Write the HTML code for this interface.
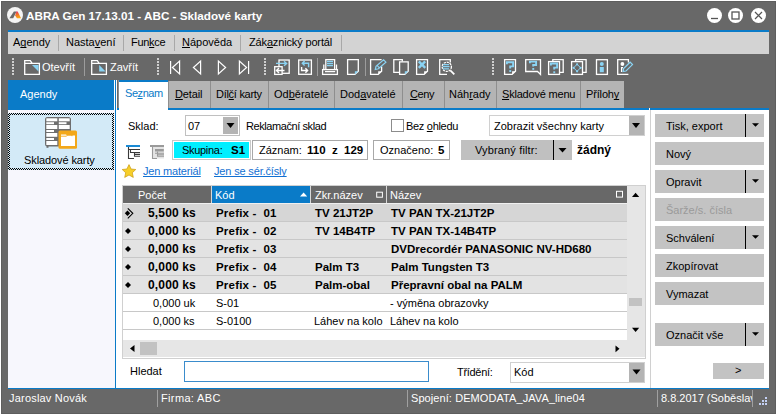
<!DOCTYPE html>
<html><head><meta charset="utf-8">
<style>
*{margin:0;padding:0;box-sizing:border-box}
html,body{width:777px;height:415px;overflow:hidden;background:#686868}
body{font-family:"Liberation Sans",sans-serif;font-size:11px;line-height:13px;color:#000;position:relative}
.r{position:absolute}
.t{position:absolute;white-space:nowrap}
u{text-decoration:underline;text-decoration-skip-ink:none}
.chk{background:repeating-conic-gradient(#000 0 25%,#d3eaf7 0 50%) 0 0/2px 2px}
svg{position:absolute;left:0;top:0}
</style></head><body>
<div class="r" style="left:0px;top:0px;width:777px;height:415px;background:#ffffff;"></div>
<div class="r" style="left:1px;top:1px;width:775px;height:413px;background:#5e5e5e;"></div>
<div class="r" style="left:2px;top:2px;width:773px;height:411px;background:#686868;"></div>
<div class="t" style="left:26px;top:9px;font-size:11.7px;font-weight:bold;color:#fff;">ABRA Gen 17.13.01 - ABC - Skladové karty</div>
<div class="r" style="left:8px;top:30px;width:761px;height:2px;background:#0a7bc8;"></div>
<div class="r" style="left:8px;top:32px;width:761px;height:22px;background:#d3d3d3;"></div>
<div class="t" style="left:13px;top:36px;">A<u>g</u>endy</div>
<div class="r" style="left:58px;top:35px;width:1px;height:16px;background:#a8a8a8;"></div>
<div class="t" style="left:66px;top:36px;">Nasta<u>v</u>ení</div>
<div class="r" style="left:123px;top:35px;width:1px;height:16px;background:#a8a8a8;"></div>
<div class="t" style="left:131px;top:36px;letter-spacing:-0.3px">Fun<u>k</u>ce</div>
<div class="r" style="left:174px;top:35px;width:1px;height:16px;background:#a8a8a8;"></div>
<div class="t" style="left:182px;top:36px;"><u>N</u>ápověda</div>
<div class="r" style="left:240px;top:35px;width:1px;height:16px;background:#a8a8a8;"></div>
<div class="t" style="left:249px;top:36px;letter-spacing:-0.15px">Zák<u>a</u>znický portál</div>
<div class="r" style="left:341px;top:35px;width:1px;height:16px;background:#a8a8a8;"></div>
<div class="t" style="left:42px;top:61px;color:#fff;">Otevřít</div>
<div class="t" style="left:110px;top:61px;color:#fff;">Zavřít</div>
<div class="r" style="left:8px;top:80px;width:106px;height:30px;background:#0a7bc8;"></div>
<div class="t" style="left:20px;top:88px;color:#fff;">Agendy</div>
<div class="r" style="left:8px;top:110px;width:107px;height:278px;background:#f7f7fd;"></div>
<div class="r" style="left:115px;top:80px;width:1px;height:308px;background:#0a7bc8;"></div>
<div class="r chk" style="left:8px;top:113px;width:106px;height:57px"></div>
<div class="r" style="left:10px;top:115px;width:102px;height:53px;background:#d3eaf7;"></div>
<div class="t" style="left:24px;top:154px;letter-spacing:-0.1px">Skladové karty</div>
<div class="r" style="left:117px;top:80px;width:1px;height:28px;background:#686868;"></div>
<div class="r" style="left:118px;top:80px;width:1px;height:28px;background:#8e8e8e;"></div>
<div class="r" style="left:114px;top:80px;width:1px;height:30px;background:#ffffff;"></div>
<div class="r" style="left:116px;top:80px;width:1px;height:308px;background:#ffffff;"></div>
<div class="r" style="left:119px;top:80px;width:49px;height:2px;background:#0a7bc8;"></div>
<div class="r" style="left:119px;top:82px;width:49px;height:28px;background:#ffffff;"></div>
<div class="r" style="left:117px;top:108px;width:2px;height:2px;background:#0a7bc8;"></div>
<div class="t" style="left:125px;top:87px;color:#0a7bc8;letter-spacing:-0.45px">Se<u>z</u>nam</div>
<div class="r" style="left:168px;top:81px;width:42px;height:27px;background:#b4b4b4;"></div>
<div class="r" style="left:168px;top:81px;width:1px;height:27px;background:#8e8e8e;"></div>
<div class="t" style="left:175px;top:88px;letter-spacing:-0.15px"><u>D</u>etail</div>
<div class="r" style="left:210px;top:81px;width:58px;height:27px;background:#b4b4b4;"></div>
<div class="r" style="left:210px;top:81px;width:1px;height:27px;background:#8e8e8e;"></div>
<div class="t" style="left:216px;top:88px;letter-spacing:-0.28px">Díl<u>č</u>í karty</div>
<div class="r" style="left:268px;top:81px;width:66px;height:27px;background:#b4b4b4;"></div>
<div class="r" style="left:268px;top:81px;width:1px;height:27px;background:#8e8e8e;"></div>
<div class="t" style="left:274px;top:88px;">Od<u>b</u>ěratelé</div>
<div class="r" style="left:334px;top:81px;width:68px;height:27px;background:#b4b4b4;"></div>
<div class="r" style="left:334px;top:81px;width:1px;height:27px;background:#8e8e8e;"></div>
<div class="t" style="left:340px;top:88px;">Dod<u>a</u>vatelé</div>
<div class="r" style="left:402px;top:81px;width:42px;height:27px;background:#b4b4b4;"></div>
<div class="r" style="left:402px;top:81px;width:1px;height:27px;background:#8e8e8e;"></div>
<div class="t" style="left:410px;top:88px;letter-spacing:-0.4px"><u>C</u>eny</div>
<div class="r" style="left:444px;top:81px;width:52px;height:27px;background:#b4b4b4;"></div>
<div class="r" style="left:444px;top:81px;width:1px;height:27px;background:#8e8e8e;"></div>
<div class="t" style="left:449px;top:88px;">Náh<u>r</u>ady</div>
<div class="r" style="left:496px;top:81px;width:84px;height:27px;background:#b4b4b4;"></div>
<div class="r" style="left:496px;top:81px;width:1px;height:27px;background:#8e8e8e;"></div>
<div class="t" style="left:502px;top:88px;letter-spacing:-0.2px"><u>S</u>kladové menu</div>
<div class="r" style="left:580px;top:81px;width:44px;height:27px;background:#b4b4b4;"></div>
<div class="r" style="left:580px;top:81px;width:1px;height:27px;background:#8e8e8e;"></div>
<div class="t" style="left:586px;top:88px;letter-spacing:-0.15px">Příloh<u>y</u></div>
<div class="r" style="left:168px;top:108px;width:481px;height:2px;background:#0a7bc8;"></div>
<div class="r" style="left:650px;top:108px;width:119px;height:2px;background:#0a7bc8;"></div>
<div class="r" style="left:117px;top:110px;width:532px;height:278px;background:#ffffff;"></div>
<div class="r" style="left:649px;top:108px;width:1px;height:280px;background:#ffffff;"></div>
<div class="r" style="left:650px;top:110px;width:1px;height:278px;background:#d0d0d0;"></div>
<div class="r" style="left:651px;top:110px;width:118px;height:278px;background:#ffffff;"></div>
<div class="r" style="left:8px;top:388px;width:761px;height:1px;background:#0a7bc8;"></div>
<div class="t" style="left:9px;top:392px;color:#fff;letter-spacing:0.2px">Jaroslav Novák</div>
<div class="r" style="left:157px;top:390px;width:1px;height:17px;background:#a0a0a0;"></div>
<div class="t" style="left:161px;top:392px;color:#fff;letter-spacing:0.35px">Firma: ABC</div>
<div class="r" style="left:407px;top:390px;width:1px;height:17px;background:#a0a0a0;"></div>
<div class="t" style="left:411px;top:392px;color:#fff;letter-spacing:0.08px">Spojení: DEMODATA_JAVA_line04</div>
<div class="r" style="left:657px;top:390px;width:1px;height:17px;background:#a0a0a0;"></div>
<div class="t" style="left:661px;top:392px;color:#fff;width:91px;overflow:hidden">8.8.2017 (Soběslav)</div>
<div class="r" style="left:752px;top:390px;width:1px;height:17px;background:#a0a0a0;"></div>
<div class="t" style="left:128px;top:120px;">Sklad:</div>
<div class="r" style="left:185px;top:115px;width:55px;height:21px;background:#c0c0c0;"></div>
<div class="r" style="left:186px;top:116px;width:53px;height:19px;background:#ffffff;"></div>
<div class="r" style="left:223px;top:117px;width:15px;height:17px;background:#b4b4b4;"></div>
<div class="t" style="left:188px;top:120px;">07</div>
<div class="t" style="left:246px;top:120px;letter-spacing:-0.42px">Reklamační sklad</div>
<div class="r" style="left:391px;top:119px;width:13px;height:13px;background:#8c8c8c;"></div>
<div class="r" style="left:392px;top:120px;width:11px;height:11px;background:#ffffff;"></div>
<div class="t" style="left:406px;top:120px;letter-spacing:-0.3px">Bez <u>o</u>hledu</div>
<div class="r" style="left:489px;top:115px;width:156px;height:21px;background:#d0d0d0;"></div>
<div class="r" style="left:490px;top:116px;width:154px;height:19px;background:#ffffff;"></div>
<div class="r" style="left:629px;top:116px;width:15px;height:19px;background:#b4b4b4;"></div>
<div class="t" style="left:494px;top:120px;">Zobrazit všechny karty</div>
<div class="r" style="left:172px;top:140px;width:79px;height:20px;background:#c8c8c8;"></div>
<div class="r" style="left:173px;top:141px;width:77px;height:18px;background:#ffffff;"></div>
<div class="r" style="left:174px;top:142px;width:75px;height:16px;background:#00efff;"></div>
<div class="t" style="left:182px;top:144px;letter-spacing:-0.3px">Skupina:</div>
<div class="t" style="left:231px;top:144px;font-size:11.5px;font-weight:bold;">S1</div>
<div class="r" style="left:252px;top:140px;width:116px;height:20px;background:#a8a8a8;"></div>
<div class="r" style="left:253px;top:141px;width:114px;height:18px;background:#ffffff;"></div>
<div class="t" style="left:259px;top:144px;">Záznam:</div>
<div class="t" style="left:307px;top:144px;font-size:11.5px;font-weight:bold;">110&nbsp; z&nbsp; 129</div>
<div class="r" style="left:373px;top:140px;width:77px;height:20px;background:#a8a8a8;"></div>
<div class="r" style="left:374px;top:141px;width:75px;height:18px;background:#ffffff;"></div>
<div class="t" style="left:380px;top:144px;">Označeno:</div>
<div class="t" style="left:438px;top:144px;font-size:11.5px;font-weight:bold;">5</div>
<div class="r" style="left:461px;top:140px;width:111px;height:20px;background:#c0c0c0;"></div>
<div class="r" style="left:553px;top:140px;width:1px;height:20px;background:#000;"></div>
<div class="t" style="left:475px;top:144px;letter-spacing:0.15px">Vybraný filtr:</div>
<div class="t" style="left:577px;top:144px;font-size:12px;font-weight:bold;">žádný</div>
<div class="t" style="left:143px;top:165px;color:#1270d2;letter-spacing:-0.18px"><u>Jen materiál</u></div>
<div class="t" style="left:214px;top:165px;color:#1270d2;letter-spacing:-0.16px"><u>Jen se sér.čísly</u></div>
<div class="r" style="left:122px;top:185px;width:524px;height:174px;background:#d0d0d0;"></div>
<div class="r" style="left:123px;top:186px;width:522px;height:172px;background:#ffffff;"></div>
<div class="r" style="left:123px;top:186px;width:504px;height:17px;background:#686868;"></div>
<div class="r" style="left:211px;top:186px;width:1px;height:17px;background:#d8d8d8;"></div>
<div class="r" style="left:212px;top:186px;width:98px;height:17px;background:#0a7bc8;"></div>
<div class="r" style="left:310px;top:186px;width:1px;height:17px;background:#d8d8d8;"></div>
<div class="r" style="left:386px;top:186px;width:1px;height:17px;background:#d8d8d8;"></div>
<div class="t" style="left:138px;top:189px;color:#fff;">Počet</div>
<div class="t" style="left:215px;top:189px;color:#fff;">Kód</div>
<div class="t" style="left:315px;top:189px;color:#fff;">Zkr.název</div>
<div class="t" style="left:390px;top:189px;color:#fff;">Název</div>
<div class="r" style="left:627px;top:186px;width:18px;height:154px;background:#e6e6e6;"></div>
<div class="r" style="left:629px;top:298px;width:13px;height:8px;background:#c2c2c2;"></div>
<div class="r" style="left:123px;top:340px;width:522px;height:17px;background:#e6e6e6;"></div>
<div class="r" style="left:140px;top:342px;width:17px;height:13px;background:#c2c2c2;"></div>
<div class="r" style="left:123px;top:204px;width:504px;height:17px;background:#d6d6d6;"></div>
<div class="r" style="left:123px;top:221px;width:504px;height:1px;background:#c8c8c8;"></div>
<div class="t" style="left:148px;top:207px;font-size:12px;font-weight:bold;letter-spacing:0.15px">5,500 ks</div>
<div class="t" style="left:216px;top:207px;font-size:11.5px;font-weight:bold;letter-spacing:0.2px">Prefix - &nbsp;01</div>
<div class="t" style="left:315px;top:207px;font-size:11.5px;font-weight:bold;">TV 21JT2P</div>
<div class="t" style="left:391px;top:207px;font-size:11.5px;font-weight:bold;">TV PAN TX-21JT2P</div>
<div class="r" style="left:123px;top:222px;width:504px;height:17px;background:#e3e3e3;"></div>
<div class="r" style="left:123px;top:239px;width:504px;height:1px;background:#c8c8c8;"></div>
<div class="t" style="left:148px;top:225px;font-size:12px;font-weight:bold;letter-spacing:0.15px">0,000 ks</div>
<div class="t" style="left:216px;top:225px;font-size:11.5px;font-weight:bold;letter-spacing:0.2px">Prefix - &nbsp;02</div>
<div class="t" style="left:315px;top:225px;font-size:11.5px;font-weight:bold;">TV 14B4TP</div>
<div class="t" style="left:391px;top:225px;font-size:11.5px;font-weight:bold;">TV PAN TX-14B4TP</div>
<div class="r" style="left:123px;top:240px;width:504px;height:17px;background:#e3e3e3;"></div>
<div class="r" style="left:123px;top:257px;width:504px;height:1px;background:#c8c8c8;"></div>
<div class="t" style="left:148px;top:243px;font-size:12px;font-weight:bold;letter-spacing:0.15px">0,000 ks</div>
<div class="t" style="left:216px;top:243px;font-size:11.5px;font-weight:bold;letter-spacing:0.2px">Prefix - &nbsp;03</div>
<div class="t" style="left:315px;top:243px;font-size:11.5px;font-weight:bold;"></div>
<div class="t" style="left:391px;top:243px;font-size:11.5px;font-weight:bold;">DVDrecordér PANASONIC NV-HD680</div>
<div class="r" style="left:123px;top:258px;width:504px;height:17px;background:#e3e3e3;"></div>
<div class="r" style="left:123px;top:275px;width:504px;height:1px;background:#c8c8c8;"></div>
<div class="t" style="left:148px;top:261px;font-size:12px;font-weight:bold;letter-spacing:0.15px">0,000 ks</div>
<div class="t" style="left:216px;top:261px;font-size:11.5px;font-weight:bold;letter-spacing:0.2px">Prefix - &nbsp;04</div>
<div class="t" style="left:315px;top:261px;font-size:11.5px;font-weight:bold;">Palm T3</div>
<div class="t" style="left:391px;top:261px;font-size:11.5px;font-weight:bold;">Palm Tungsten T3</div>
<div class="r" style="left:123px;top:276px;width:504px;height:17px;background:#e3e3e3;"></div>
<div class="r" style="left:123px;top:293px;width:504px;height:1px;background:#c8c8c8;"></div>
<div class="t" style="left:148px;top:279px;font-size:12px;font-weight:bold;letter-spacing:0.15px">0,000 ks</div>
<div class="t" style="left:216px;top:279px;font-size:11.5px;font-weight:bold;letter-spacing:0.2px">Prefix - &nbsp;05</div>
<div class="t" style="left:315px;top:279px;font-size:11.5px;font-weight:bold;">Palm-obal</div>
<div class="t" style="left:391px;top:279px;font-size:11.5px;font-weight:bold;">Přepravní obal na PALM</div>
<div class="r" style="left:123px;top:294px;width:504px;height:17px;background:#ffffff;"></div>
<div class="r" style="left:123px;top:311px;width:504px;height:1px;background:#c8c8c8;"></div>
<div class="t" style="left:153px;top:297px;">0,000 uk</div>
<div class="t" style="left:216px;top:297px;">S-01</div>
<div class="t" style="left:314px;top:297px;"></div>
<div class="t" style="left:390px;top:297px;">- výměna obrazovky</div>
<div class="r" style="left:123px;top:312px;width:504px;height:17px;background:#ffffff;"></div>
<div class="r" style="left:123px;top:329px;width:504px;height:1px;background:#c8c8c8;"></div>
<div class="t" style="left:153px;top:315px;">0,000 ks</div>
<div class="t" style="left:216px;top:315px;">S-0100</div>
<div class="t" style="left:314px;top:315px;">Láhev na kolo</div>
<div class="t" style="left:390px;top:315px;">Láhev na kolo</div>
<div class="r" style="left:123px;top:203px;width:504px;height:1px;background:#f0f0f0;"></div>
<div class="t" style="left:130px;top:365px;">Hledat</div>
<div class="r" style="left:184px;top:361px;width:245px;height:21px;background:#3a8ccc;"></div>
<div class="r" style="left:185px;top:362px;width:243px;height:19px;background:#ffffff;"></div>
<div class="t" style="left:457px;top:366px;letter-spacing:-0.3px">Třídění:</div>
<div class="r" style="left:510px;top:362px;width:135px;height:21px;background:#d0d0d0;"></div>
<div class="r" style="left:511px;top:363px;width:133px;height:19px;background:#ffffff;"></div>
<div class="r" style="left:629px;top:363px;width:15px;height:19px;background:#b4b4b4;"></div>
<div class="t" style="left:514px;top:366px;">Kód</div>
<div class="r" style="left:655px;top:114px;width:109px;height:23px;background:#c3c3c3;"></div>
<div class="r" style="left:745px;top:114px;width:1px;height:23px;background:#000;"></div>
<div class="t" style="left:666px;top:120px;">Tisk, export</div>
<div class="r" style="left:655px;top:142px;width:109px;height:23px;background:#c3c3c3;"></div>
<div class="t" style="left:666px;top:148px;">Nový</div>
<div class="r" style="left:655px;top:170px;width:109px;height:23px;background:#c3c3c3;"></div>
<div class="r" style="left:745px;top:170px;width:1px;height:23px;background:#000;"></div>
<div class="t" style="left:666px;top:176px;">Opravit</div>
<div class="r" style="left:655px;top:198px;width:109px;height:23px;background:#c3c3c3;"></div>
<div class="t" style="left:666px;top:204px;color:#9a9a9a;">Šarže/s. čísla</div>
<div class="r" style="left:655px;top:226px;width:109px;height:23px;background:#c3c3c3;"></div>
<div class="r" style="left:745px;top:226px;width:1px;height:23px;background:#000;"></div>
<div class="t" style="left:666px;top:232px;">Schválení</div>
<div class="r" style="left:655px;top:254px;width:109px;height:23px;background:#c3c3c3;"></div>
<div class="t" style="left:666px;top:260px;">Zkopírovat</div>
<div class="r" style="left:655px;top:282px;width:109px;height:23px;background:#c3c3c3;"></div>
<div class="t" style="left:666px;top:288px;">Vymazat</div>
<div class="r" style="left:655px;top:323px;width:109px;height:23px;background:#c3c3c3;"></div>
<div class="r" style="left:745px;top:323px;width:1px;height:23px;background:#000;"></div>
<div class="t" style="left:666px;top:329px;">Označit vše</div>
<div class="r" style="left:713px;top:363px;width:51px;height:16px;background:#c3c3c3;"></div>
<div class="t" style="left:735px;top:364px;">&gt;</div>
<svg width="777" height="415" viewBox="0 0 777 415">
<!-- logo -->
<defs><linearGradient id="lg" x1="0" y1="0" x2="0.3" y2="1"><stop offset="0" stop-color="#e0207a"/><stop offset="0.45" stop-color="#f36a2a"/><stop offset="1" stop-color="#f7a818"/></linearGradient></defs>
<circle cx="15" cy="15" r="8" fill="#f4f4f4"/>
<path d="M9.4 18.3 L13.9 11.4 H16.6 L13.2 18.3 Z" fill="#6a6a6a"/>
<path d="M16.3 11.4 H17.7 L21.1 18.3 H16.9 L15.2 15.6 Z" fill="url(#lg)"/>
<!-- window buttons -->
<circle cx="714.5" cy="15.5" r="7.5" fill="#fff"/>
<path d="M711 18.5 H718" stroke="#555" stroke-width="1.3"/>
<circle cx="735.5" cy="15.5" r="7.5" fill="#fff"/>
<rect x="732" y="12" width="7" height="7" fill="none" stroke="#555" stroke-width="1.3"/>
<circle cx="758.5" cy="15.5" r="7.5" fill="#fff"/>
<path d="M755 12 L762 19 M762 12 L755 19" stroke="#555" stroke-width="1.2"/>
<!-- grips -->
<g fill="#cfcfcf">
<rect x="12" y="58" width="2" height="2"/><rect x="12" y="61" width="2" height="2"/><rect x="12" y="64" width="2" height="2"/><rect x="12" y="67" width="2" height="2"/><rect x="12" y="70" width="2" height="2"/><rect x="12" y="73" width="2" height="2"/>
<rect x="157" y="58" width="2" height="2"/><rect x="157" y="61" width="2" height="2"/><rect x="157" y="64" width="2" height="2"/><rect x="157" y="67" width="2" height="2"/><rect x="157" y="70" width="2" height="2"/><rect x="157" y="73" width="2" height="2"/>
<rect x="264" y="58" width="2" height="2"/><rect x="264" y="61" width="2" height="2"/><rect x="264" y="64" width="2" height="2"/><rect x="264" y="67" width="2" height="2"/><rect x="264" y="70" width="2" height="2"/><rect x="264" y="73" width="2" height="2"/>
<rect x="492" y="58" width="2" height="2"/><rect x="492" y="61" width="2" height="2"/><rect x="492" y="64" width="2" height="2"/><rect x="492" y="67" width="2" height="2"/><rect x="492" y="70" width="2" height="2"/><rect x="492" y="73" width="2" height="2"/>
</g>
<g fill="#9c9c9c">
<rect x="84" y="58" width="1" height="18"/>
<rect x="317" y="58" width="1" height="18"/>
<rect x="365" y="58" width="1" height="18"/>
</g>
<g fill="none" stroke="#fff" stroke-width="1.3">
<!-- folders -->
<path d="M24.7 74.4 V60.6 H30.3 L32.2 63.3 H39.4 V74.4 Z M24.7 63.3 H32.2"/>
<path d="M91.7 74.4 V60.6 H97.3 L99.2 63.3 H106.4 V74.4 Z M91.7 63.3 H99.2"/>
<!-- nav -->
<path d="M170.6 61 V74 M179.6 61 V74 L172.4 67.5 Z" stroke-width="1.2"/>
<path d="M200.6 61 V74 L193.4 67.5 Z" stroke-width="1.2"/>
<path d="M218.4 61 V74 L225.6 67.5 Z" stroke-width="1.2"/>
<path d="M239.4 61 V74 L246.6 67.5 Z M248.6 61 V74" stroke-width="1.2"/>
<!-- icon A -->
<rect x="279" y="60" width="10.2" height="13.3"/>
<rect x="274.7" y="66.7" width="7.4" height="7.7" fill="#686868"/>
<!-- icon B -->
<rect x="298.7" y="60" width="12.7" height="14.3"/>
<!-- printer -->
<path d="M325.8 69 V59.7 H334.6 V69"/>
<path d="M323.8 69 V64.6 M336.5 69 V64.6"/>
<rect x="322.6" y="69.6" width="14.8" height="4.8"/>
<path d="M325 71.6 H335.2"/>
<!-- new doc -->
<path d="M347.6 59.7 H358.3 V71.2 L354.9 74.4 H347.6 Z"/>
<!-- edit doc -->
<path d="M381.6 66.5 V71.2 L378.2 74.4 H370.6 V59.7 H381.6"/>
<!-- copy -->
<path d="M399 72.4 H393.8 V59.7 H402.3 V61.5"/>
<path d="M399.6 61.8 H408.2 V71.2 L404.8 74.4 H399.6 Z"/>
<!-- delete doc -->
<path d="M416.6 59.7 H427.5 V71.2 L424.1 74.4 H416.6 Z"/>
<!-- search doc -->
<path d="M450.3 62.5 V59.7 H439.7 V74.4 H447"/>
<circle cx="446.8" cy="66.8" r="4.6" fill="#686868" stroke-dasharray="2.2 0.8"/>
<path d="M450.3 70.3 L454.3 74.3" stroke-width="1.8"/>
<!-- help doc -->
<path d="M504.6 59.7 H515.5 V71.2 L512.1 74.4 H504.6 Z"/>
<!-- speech -->
<path d="M525.7 59.7 H540.5 V74.4 L537.5 71.5 H525.7 Z"/>
<!-- docs ? -->
<path d="M559.5 72.3 H563.2 V59.7 H552.8 V61.4"/>
<rect x="548.6" y="61.6" width="10.9" height="12.8"/>
<!-- docs diamond -->
<path d="M582.3 72.3 H586.1 V59.7 H575.6 V61.4"/>
<rect x="571.6" y="61.6" width="10.9" height="12.8"/>
<!-- info -->
<rect x="596.5" y="59.7" width="10.9" height="14.7"/>
<!-- person edit -->
<path d="M628.4 62.5 V59.7 H617.7 V74.4 H628.4"/>
<path d="M621.6 72 V67.6 H623"/>
</g>
<g fill="#fff">
<!-- folds -->
<path d="M381.6 71.2 L378.2 74.4 V71.2 Z"/>
<path d="M427.5 71.2 L424.1 74.4 V71.2 Z"/>
<path d="M515.5 71.2 L512.1 74.4 V71.2 Z"/>
<circle cx="622.4" cy="64" r="1.9"/>
</g>
<g fill="#8ad3f3">
<path d="M32 65 H38.5 V71.5 Z"/>
<path d="M99.2 65 V71.5 H105.6 Z"/>
<path d="M354.9 74.4 L358.3 71.2 H354.9 Z"/>
<path d="M404.8 74.4 L408.2 71.2 H404.8 Z"/>
<circle cx="601.8" cy="64" r="2"/>
<rect x="599.8" y="67" width="4" height="5.2"/>
</g>
<g fill="none" stroke="#8ad3f3" stroke-width="1.3">
<!-- icon A arrows -->
<path d="M276 63.4 H286.5 M284 61.2 L286.6 63.4 L284 65.7" stroke-width="1.4"/>
<!-- icon B blue -->
<path d="M302.3 63.3 H308.6 V67.2 M304.6 61.1 L302.3 63.3 L304.6 65.5" stroke-width="1.4"/>
<!-- printer lines -->
<path d="M327 61.4 H333 M327 63.5 H333 M327 65.6 H333"/>
<!-- edit pencil -->
<path d="M375.3 69.5 L376 66.4 L383.6 59.9 L385.9 62.2 L378.4 68.8 Z M377.3 65.6 L379.1 67.6" stroke-width="1.2"/>
<!-- delete X -->
<path d="M418.8 61.4 L425.2 67.8 M425.2 61.4 L418.8 67.8" stroke-width="2.4"/><rect x="420.6" y="63.2" width="2.8" height="2.8" fill="#8ad3f3" stroke="none"/>
<!-- search lines -->
<path d="M443 64.6 H449 M442.6 66.7 H449.5 M443 68.8 H449"/>
<!-- ? marks -->
<path d="M506.9 64.2 V62.3 H513.1 V66.4 H510.2 V68.4" stroke-width="1.9" stroke-linejoin="miter"/>
<path d="M529.9 63.2 V61.6 H536.1 V65 H533.2 V66.6" stroke-width="1.9" stroke-linejoin="miter"/>
<path d="M550.9 65.4 V63.5 H557.1 V67.60000000000001 H554.2 V69.60000000000001" stroke-width="1.9" stroke-linejoin="miter"/>
<!-- diamond -->
<path d="M577.1 64.3 L580.6 67.8 L577.1 71.3 L573.6 67.8 Z" stroke-width="1"/>
<!-- person pencil -->
<path d="M623.1 71.6 L623.6 68.6 L630.1 62.2 L632.5 64.6 L626 71 Z" stroke-width="1.2"/>
</g>
<g fill="#8ad3f3">
<rect x="509.3" y="70.1" width="1.9" height="1.9"/>
<rect x="532.3" y="68" width="1.9" height="1.9"/>
<rect x="553.3" y="71.3" width="1.9" height="1.9"/>
<circle cx="577.1" cy="64.3" r="1.1"/><circle cx="580.6" cy="67.8" r="1.1"/><circle cx="577.1" cy="71.3" r="1.1"/><circle cx="573.6" cy="67.8" r="1.1"/>
</g>
<g fill="none" stroke="#fff" stroke-width="1.4">
<path d="M276.5 70.5 H284.5 M279 68.1 L276.5 70.5 L279 72.9"/>
<path d="M301.6 67 V70.5 H307.6 M305.4 68.3 L307.6 70.5 L305.4 72.7"/>
</g>
<!-- cabinet icon -->
<rect x="45" y="117" width="26" height="29.5" rx="2.5" fill="#6e6e6e"/>
<rect x="46.5" y="146" width="2" height="1.8" fill="#6e6e6e"/>
<g fill="#fff">
<rect x="46.3" y="118.3" width="11" height="3"/><rect x="58.8" y="118.3" width="10.9" height="3"/>
<rect x="46.3" y="122.2" width="7.7" height="2"/><rect x="58.8" y="122.2" width="7.7" height="2"/>
<rect x="46.3" y="125" width="11" height="4"/><rect x="58.8" y="125" width="10.9" height="4"/>
<rect x="46.3" y="130" width="7.7" height="2"/>
<rect x="46.3" y="133" width="11" height="3.8"/>
<rect x="46.3" y="138" width="7.7" height="2"/>
<rect x="46.3" y="141" width="11" height="4"/>
</g>
<rect x="58.5" y="130.5" width="18.5" height="18.2" rx="1.5" fill="#f3a81a"/>
<path d="M61 134.5 H66 L67 135.5 H75 V146 H61 Z" fill="#fff"/>
<path d="M61 136.2 H66.5 L67.5 135 H72 V136.2" fill="none" stroke="#f3a81a" stroke-width="0.9"/>
<!-- tree icons -->
<rect x="126" y="145" width="14" height="2" fill="#1a8ad4"/>
<path d="M128.5 147 V158.5 H134 M128.5 149.5 H140 M130.5 149.5 V152.5 H140 M134.5 152.5 V156.3 H140 M134.5 154.4 H140" fill="none" stroke="#3a3a3a" stroke-width="1.1"/>
<rect x="150" y="145" width="14" height="2" fill="#9a9a9a"/>
<rect x="153" y="147" width="11" height="11.5" fill="#e4e4e4"/>
<rect x="155" y="149" width="8.8" height="2.5" fill="#9a9a9a"/>
<path d="M152.5 147 V158.5 H157 M155 153.2 H164 M157.5 151.5 V156.3 H164 M157.5 154.8 H164" fill="none" stroke="#9a9a9a" stroke-width="1.1"/>
<!-- star -->
<path d="M129 164.6 L131.1 169 L135.8 169.5 L132.3 172.7 L133.3 177.4 L129 175 L124.7 177.4 L125.7 172.7 L122.2 169.5 L126.9 169 Z" fill="#f7cf2a" stroke="#c89a10" stroke-width="0.7"/>
<!-- combo triangles -->
<g fill="#000">
<path d="M226.5 123 H234.5 L230.5 128 Z"/>
<path d="M632 123 H640 L636 128 Z"/>
<path d="M632.5 369.5 H640.5 L636.5 374.5 Z"/>
<path d="M558.5 148 H566.5 L562.5 152.5 Z"/>
<path d="M752 123.3 H759 L755.5 126.8 Z"/>
<path d="M752 179.3 H759 L755.5 182.8 Z"/>
<path d="M752 235.3 H759 L755.5 238.8 Z"/>
<path d="M752 332.3 H759 L755.5 335.8 Z"/>
<!-- scroll arrows -->
<path d="M632 197 L635.6 192.7 L639.2 197 Z"/>
<path d="M632 327.7 H639.2 L635.6 332 Z"/>
<path d="M134.5 345 V352 L130 348.5 Z"/>
<path d="M615.5 345.4 V352.2 L619.5 348.8 Z"/>
<!-- row markers -->
<path d="M124.8 213.3 L127.5 210.6 L130.2 213.3 L127.5 216 Z"/>
<path d="M127.8 208.4 L132.8 213.3 L127.8 218.3" fill="none" stroke="#000" stroke-width="1.1"/>
<path d="M125 231 L128 228 L131 231 L128 234 Z"/>
<path d="M125 249 L128 246 L131 249 L128 252 Z"/>
<path d="M125 267 L128 264 L131 267 L128 270 Z"/>
<path d="M125 285 L128 282 L131 285 L128 288 Z"/>
</g>
<!-- header icons -->
<path d="M300 196.5 L303.6 192.5 L307.2 196.5 Z" fill="#fff"/>
<rect x="376.7" y="192.2" width="5.7" height="5" fill="none" stroke="#fff" stroke-width="1"/>
<rect x="616.5" y="191.3" width="6" height="5.8" fill="none" stroke="#fff" stroke-width="1"/>
<!-- status grip -->
<g fill="#c4d0f4">
<rect x="765" y="397" width="2" height="2"/>
<rect x="762" y="400" width="2" height="2"/><rect x="765" y="400" width="2" height="2"/>
<rect x="759" y="403" width="2" height="2"/><rect x="762" y="403" width="2" height="2"/><rect x="765" y="403" width="2" height="2"/>
</g>
</svg>

</body></html>
